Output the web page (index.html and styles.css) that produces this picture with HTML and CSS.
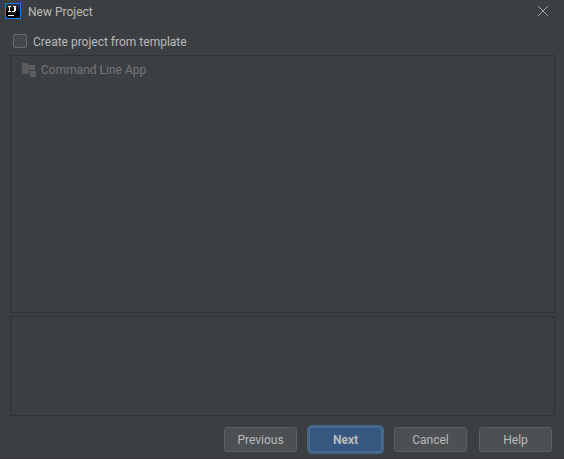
FILE: index.html
```html
<!DOCTYPE html>
<html lang="en">
<head>
<meta charset="utf-8">
<title>New Project</title>
<link rel="stylesheet" href="styles.css">
</head>
<body>
<main class="dialog">
  <header class="titlebar">
    <svg class="logo" width="16" height="16" viewBox="0 0 16 16" aria-hidden="true" shape-rendering="crispEdges">
      <defs><linearGradient id="shade" x1="0" y1="0" x2="0" y2="1"><stop offset="0" stop-color="#383838"/><stop offset=".6" stop-color="#000"/></linearGradient></defs>
      <rect width="16" height="16" fill="#087cfa"/>
      <rect x="1" y="1" width="14" height="14" fill="url(#shade)"/>
      <path d="M3 3h3v1H3zM4 4h1v4H4zM3 8h3v1H3zM8 3h3v1H8zM9 4h2v4H9zM7 8h3v1H7zM3 12h6v1H3z" fill="#fff"/>
    </svg>
    <h1 class="title">New Project</h1>
    <button class="close" type="button" aria-label="Close">
      <svg width="10" height="10" viewBox="0 0 10 10" aria-hidden="true"><path d="M0 0l10 10M10 0L0 10" stroke="#a4a6a7" stroke-width="1"/></svg>
    </button>
  </header>
  <label class="option"><input class="check" type="checkbox">Create project from template</label>
  <section class="panel templates">
    <ul class="list">
      <li class="item">
        <svg width="16" height="16" viewBox="0 0 16 16" aria-hidden="true">
          <path d="M1 1h5l2 2h6v5H8v4H1z" fill="#5a5a5a"/>
          <path d="M9 9h6v6H9z" fill="#5e5e5e"/>
        </svg>
        <span>Command Line App</span>
      </li>
    </ul>
  </section>
  <section class="panel description"></section>
  <footer class="actions">
    <button class="button" type="button">Previous</button>
    <button class="button primary" type="button">Next</button>
    <button class="button" type="button">Cancel</button>
    <button class="button" type="button">Help</button>
  </footer>
</main>
</body>
</html>
```
FILE: styles.css
```css
* { box-sizing: border-box; }
body {
  margin: 0;
  background: #3c3f41;
  color: #bbbbbb;
  font: 12px/16px Roboto, "Noto Sans", sans-serif;
}
.dialog {
  display: flex;
  flex-direction: column;
  min-height: 100vh;
  border-bottom: 1px solid #353436;
}
.titlebar {
  display: flex;
  align-items: center;
  gap: 7px;
  height: 22px;
  padding: 0 16px 0 5px;
}
.title { flex: 1; margin: 0; padding-top: 2px; font: inherit; }
.close {
  display: flex;
  padding: 0;
  border: 0;
  background: none;
}
.option {
  display: flex;
  align-items: flex-start;
  gap: 6px;
  align-self: flex-start;
  margin: 12px 13px 5px;
}
.check {
  appearance: none;
  width: 14px;
  height: 14px;
  margin: 0;
  border: 1px solid #6b6b6b;
  border-radius: 2px;
  background: #43494a;
}
.panel {
  margin: 0 9px 0 10px;
  border: 1px solid #323232;
}
.templates {
  flex: 1;
  margin-bottom: 3px;
}
.description { height: 100px; }
.list { margin: 0; padding: 6px 10px; list-style: none; }
.item {
  display: flex;
  align-items: center;
  gap: 4px;
  color: #777777;
}
.actions {
  display: flex;
  justify-content: flex-end;
  gap: 12px;
  padding: 11px 12px 6px;
}
.button {
  width: 73px;
  height: 25px;
  padding: 0;
  border: 1px solid #5e6060;
  border-radius: 3px;
  background: #4c5052;
  color: #bbbbbb;
  font: inherit;
}
.primary {
  border-color: #4c708c;
  background: #365880;
  box-shadow: 0 0 0 2px #43688c;
  font-weight: bold;
}
```
